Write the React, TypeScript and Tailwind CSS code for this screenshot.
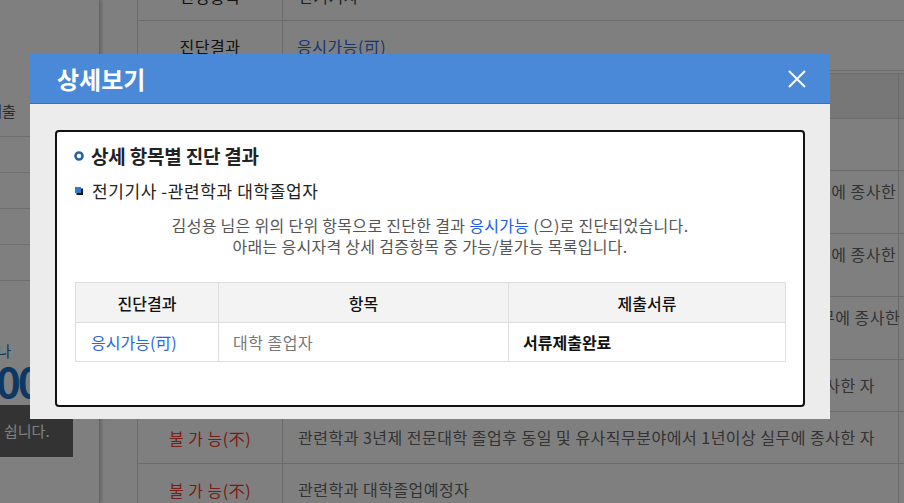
import React from "react";

const FONT = "font-['Noto_Sans_CJK_KR','Noto_Sans',sans-serif]";

type Row = { h: string; result: string; lines: string[] };

const criteriaRows: Row[] = [
  { h: "h-[52px]", result: "응시가능(可)", lines: ["관련학과 대학졸업자"] },
  {
    h: "h-[63px]",
    result: "불 가 능(不)",
    lines: ["유사직무분야의 산업기사 자격 취득 후 동일 및 유사직무분야에서 1년이상 실무에 종사한", "자"],
  },
  {
    h: "h-[63px]",
    result: "불 가 능(不)",
    lines: ["유사직무분야의 기능사 자격을 취득 후 동일 및 유사직무분야에서 3년이상 실무에 종사한", "자"],
  },
  {
    h: "h-[63px]",
    result: "불 가 능(不)",
    lines: ["외국에서 동일 종류의 자격을 취득한 후 동일 및 유사직무분야에서 2년이상 실무에 종사한", "자"],
  },
  {
    h: "h-[52px]",
    result: "불 가 능(不)",
    lines: ["관련학과 2년제 전문대학 졸업후 동일 및 유사직무분야에서 2년이상 실무에 종사한 자"],
  },
  {
    h: "h-[52px]",
    result: "불 가 능(不)",
    lines: ["관련학과 3년제 전문대학 졸업후 동일 및 유사직무분야에서 1년이상 실무에 종사한 자"],
  },
  { h: "h-[52px]", result: "불 가 능(不)", lines: ["관련학과 대학졸업예정자"] },
];

function Sidebar() {
  return (
    <aside className="relative z-10 w-[100px] shrink-0 h-full overflow-hidden bg-white border-r border-[#c8c8c8] shadow-[2px_0_3px_rgba(0,0,0,0.18)]">
      <div className="ml-[-110px] w-[209px]">
        <div className="h-[87px]" />
        <div className="h-[50px] border-b border-[#dcdcdc] flex items-center pl-[12px] text-[15px] text-[#555]">
          응시자격 서류제출
        </div>
        {["자격정보", "시험일정", "합격발표", "자료실"].map((t) => (
          <div
            key={t}
            className="h-[36px] border-b border-[#dcdcdc] flex items-center pl-[20px] text-[14px] text-[#555]"
          >
            {t}
          </div>
        ))}
        <div className="h-[26px]" />
        <div className="h-[98px] flex flex-col items-end pr-[88px] pt-[34px]">
          <div className="text-[15px] leading-[20px] text-[#2a6fc4]">상담문의는 전화나</div>
        </div>
        <div className="h-[52px] w-[183px] bg-[#666] flex items-center text-[15px] text-white whitespace-nowrap">
          <span className="w-[108px] text-right">안내받기</span>
          <span className="ml-[6px]">쉽니다.</span>
        </div>
      </div>
      <div className="absolute left-[-106px] top-[356px] flex whitespace-nowrap text-[42px] leading-[48px] font-bold text-[#1d70c8] tracking-[-3px]">
        <span className="w-[102px] text-right">1600-</span>
        <span>0000</span>
      </div>
    </aside>
  );
}

function Background() {
  return (
    <div className="flex h-full">
      <Sidebar />
      <main className="flex-1 pl-[37px] overflow-hidden bg-white text-[16px] tracking-[0.5px]">
        <div className="mt-[-29px] w-[900px] border-l border-b border-[#d6d6d6]">
          <div className="flex h-[50px] border-b border-[#d6d6d6]">
            <div className="w-[145px] shrink-0 border-r border-[#d6d6d6] flex items-center justify-center text-[#222]">
              신청종목
            </div>
            <div className="flex items-center pl-[15px] text-[#444]">전기기사</div>
          </div>
          <div className="flex h-[49px]">
            <div className="w-[145px] shrink-0 border-r border-[#d6d6d6] flex items-center justify-center text-[#222]">
              진단결과
            </div>
            <div className="flex items-center pl-[14px] text-[#2f6fe8]">응시가능(可)</div>
          </div>
        </div>
        <div className="mt-[2px] w-[900px] border-l border-t border-[#d6d6d6]">
          <div className="flex h-[45px] bg-[#eeeeee] border-b border-[#d6d6d6]">
            <div className="w-[145px] shrink-0 border-r border-[#d6d6d6] flex items-center justify-center text-[#222]">
              진단결과
            </div>
            <div className="w-[616px] shrink-0 border-r border-[#d6d6d6] flex items-center justify-center text-[#222]">
              응시자격 항목
            </div>
            <div className="flex-1" />
          </div>
          {criteriaRows.map((r, i) => (
            <div key={i} className={`flex ${r.h} border-b border-[#d6d6d6]`}>
              <div
                className={`w-[145px] shrink-0 border-r border-[#d6d6d6] flex items-center justify-center ${
                  r.result.startsWith("응시") ? "text-[#2f6fe8]" : "text-[#f03828]"
                }`}
              >
                {r.result}
              </div>
              <div className="w-[616px] shrink-0 border-r border-[#d6d6d6] flex flex-col justify-center pl-[15px] leading-[21px] text-[#666] whitespace-nowrap">
                {r.lines.map((l, j) => (
                  <span key={j}>{l}</span>
                ))}
              </div>
              <div className="flex-1" />
            </div>
          ))}
        </div>
      </main>
    </div>
  );
}

function RingBullet() {
  return (
    <svg width="10" height="10" viewBox="0 0 10 10" className="shrink-0">
      <circle cx="5" cy="5" r="3.5" fill="#fff" stroke="#2b62a3" strokeWidth="2.6" />
    </svg>
  );
}

function SquareBullet() {
  return (
    <svg width="8" height="8" viewBox="0 0 8 8" className="shrink-0">
      <rect x="1.5" y="1.5" width="6.5" height="6.5" fill="#111" />
      <rect x="0" y="0" width="6" height="6" fill="#2f7ad0" />
    </svg>
  );
}

function DetailDialog() {
  return (
    <div className="absolute left-[30px] top-[54px] w-[800px] bg-[#ececec]">
      <div className="h-[50px] bg-[#4a89d8] border-b border-[#3b6fae] flex items-center justify-between pl-[27px] pr-[24px]">
        <h2 className="text-[24px] font-bold text-white leading-none">상세보기</h2>
        <svg width="18" height="18" viewBox="0 0 18 18">
          <path d="M1 1L17 17M17 1L1 17" stroke="#fff" strokeWidth="2" />
        </svg>
      </div>
      <div className="pt-[26px] px-[25px] pb-[12px]">
        <div className="bg-white border-2 border-[#111] rounded-[4px] px-[17px] pt-[11px] pb-[43px]">
          <div className="flex items-center gap-[7px] h-[26px]">
            <RingBullet />
            <span className="text-[19px] font-bold text-[#222] tracking-[-0.2px]">상세 항목별 진단 결과</span>
          </div>
          <div className="mt-[11px] flex items-center gap-[9px] h-[22px] pl-[1px]">
            <SquareBullet />
            <span className="text-[17px] text-[#222] tracking-[0.6px]">전기기사 -관련학과 대학졸업자</span>
          </div>
          <div className="mt-[13px] text-center text-[16px] leading-[21px] text-[#555] tracking-[0.3px]">
            <p>
              김성용 님은 위의 단위 항목으로 진단한 결과 <span className="text-[#2160e6]">응시가능</span> (으)로
              진단되었습니다.
            </p>
            <p>아래는 응시자격 상세 검증항목 중 가능/불가능 목록입니다.</p>
          </div>
          <div className="mt-[25px] ml-[1px] border border-[#dedede] text-[16px]">
            <div className="flex h-[40px] bg-[#f3f3f3] border-b border-[#dedede] text-[#111] font-medium">
              <div className="w-[143px] border-r border-[#dedede] flex items-center justify-center">진단결과</div>
              <div className="w-[290px] border-r border-[#dedede] flex items-center justify-center">항목</div>
              <div className="flex-1 flex items-center justify-center">제출서류</div>
            </div>
            <div className="flex h-[38px]">
              <div className="w-[143px] border-r border-[#dedede] flex items-center pl-[15px] text-[#2a66e0]">
                응시가능(可)
              </div>
              <div className="w-[290px] border-r border-[#dedede] flex items-center pl-[14px] text-[#777] tracking-[0.5px]">
                대학 졸업자
              </div>
              <div className="flex-1 flex items-center pl-[14px] font-bold text-[#111]">서류제출완료</div>
            </div>
          </div>
        </div>
      </div>
    </div>
  );
}

export default function App() {
  return (
    <div className={`relative w-[904px] h-[503px] overflow-hidden bg-white ${FONT}`}>
      <Background />
      <div className="absolute inset-0 z-20 bg-black/50" />
      <div className="absolute inset-0 z-30">
        <DetailDialog />
      </div>
    </div>
  );
}
